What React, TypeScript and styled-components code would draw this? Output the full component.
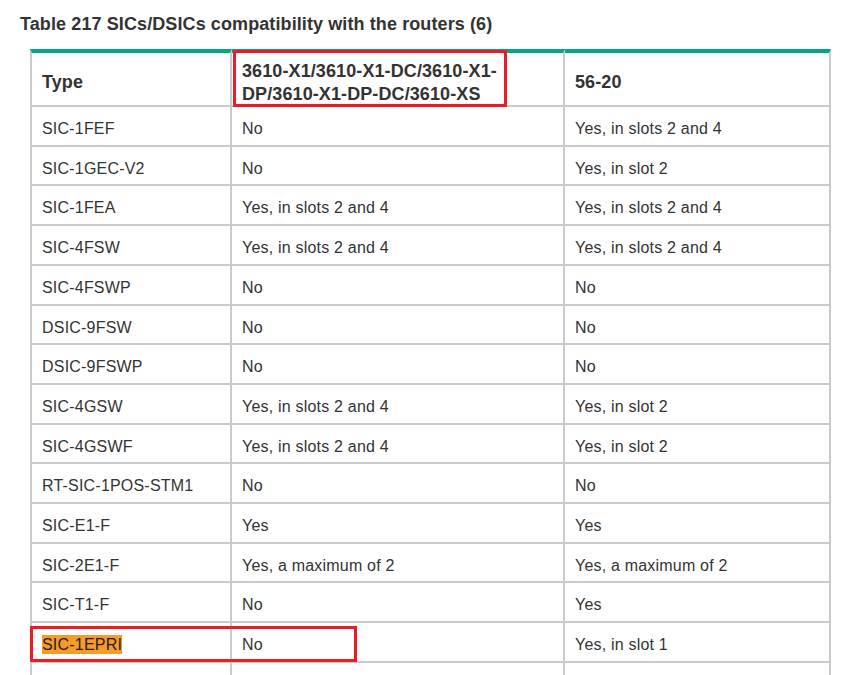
import React from "react";
import styled, { createGlobalStyle } from "styled-components";

const GlobalStyle = createGlobalStyle`
  html, body { margin: 0; padding: 0; background: #ffffff; }
  body { font-family: "Liberation Sans", Arial, sans-serif; color: #333333; }
`;

const Page = styled.div`
  padding: 13px 0 0 20px;
`;

const Title = styled.div`
  font-size: 18px;
  font-weight: bold;
  line-height: 22px;
  letter-spacing: 0.1px;
  color: #333333;
  margin-bottom: 14px;
`;

const TableWrap = styled.div`
  position: relative;
  margin-left: 10px;
  width: 801px;
`;

const Table = styled.table`
  border-collapse: separate;
  border-spacing: 0;
  table-layout: fixed;
  width: 801px;
  font-size: 16px;
`;

const HeadCell = styled.th<{ $first?: boolean }>`
  text-align: left;
  font-size: 18px;
  font-weight: bold;
  letter-spacing: 0.1px;
  vertical-align: middle;
  line-height: 22.5px;
  padding: 7px 10px 0 10px;
  border-top: 4px solid #01a982;
  border-right: 2px solid #c8cbcb;
  border-bottom: 2px solid #c8cbcb;
  border-left: ${(p) => (p.$first ? "2px solid #c8cbcb" : "none")};
  color: #333333;
`;

const HeadText = styled.span<{ $w?: number }>`
  display: block;
  max-width: ${(p) => (p.$w ? `${p.$w}px` : "none")};
`;

const Cell = styled.td<{ $first?: boolean }>`
  vertical-align: middle;
  line-height: 23.71px;
  letter-spacing: 0.2px;
  padding: 10px 10px 4px 10px;
  border-right: 2px solid #c8cbcb;
  border-bottom: 2px solid #c8cbcb;
  border-left: ${(p) => (p.$first ? "2px solid #c8cbcb" : "none")};
  color: #333333;
`;

const Highlight = styled.span`
  background: #f8992c;
  color: #222222;
  padding: 1px 0;
`;

const RedBox = styled.div<{ $l: number; $t: number; $w: number; $h: number }>`
  position: absolute;
  left: ${(p) => p.$l}px;
  top: ${(p) => p.$t}px;
  width: ${(p) => p.$w}px;
  height: ${(p) => p.$h}px;
  border: 3px solid #ec1c24;
  box-sizing: border-box;
  pointer-events: none;
`;

const rows: [string, string, string][] = [
  ["SIC-1FEF", "No", "Yes, in slots 2 and 4"],
  ["SIC-1GEC-V2", "No", "Yes, in slot 2"],
  ["SIC-1FEA", "Yes, in slots 2 and 4", "Yes, in slots 2 and 4"],
  ["SIC-4FSW", "Yes, in slots 2 and 4", "Yes, in slots 2 and 4"],
  ["SIC-4FSWP", "No", "No"],
  ["DSIC-9FSW", "No", "No"],
  ["DSIC-9FSWP", "No", "No"],
  ["SIC-4GSW", "Yes, in slots 2 and 4", "Yes, in slot 2"],
  ["SIC-4GSWF", "Yes, in slots 2 and 4", "Yes, in slot 2"],
  ["RT-SIC-1POS-STM1", "No", "No"],
  ["SIC-E1-F", "Yes", "Yes"],
  ["SIC-2E1-F", "Yes, a maximum of 2", "Yes, a maximum of 2"],
  ["SIC-T1-F", "No", "Yes"],
  ["SIC-1EPRI", "No", "Yes, in slot 1"],
];

export default function App() {
  return (
    <>
      <GlobalStyle />
      <Page>
        <Title>Table 217 SICs/DSICs compatibility with the routers (6)</Title>
        <TableWrap>
          <Table>
            <colgroup>
              <col style={{ width: 202 }} />
              <col style={{ width: 333 }} />
              <col style={{ width: 266 }} />
            </colgroup>
            <thead>
              <tr>
                <HeadCell $first>Type</HeadCell>
                <HeadCell>
                  <HeadText $w={270}>3610-X1/3610-X1-DC/3610-X1-DP/3610-X1-DP-DC/3610-XS</HeadText>
                </HeadCell>
                <HeadCell>56-20</HeadCell>
              </tr>
            </thead>
            <tbody>
              {rows.map(([a, b, c]) => (
                <tr key={a}>
                  <Cell $first>{a === "SIC-1EPRI" ? <Highlight>{a}</Highlight> : a}</Cell>
                  <Cell>{b}</Cell>
                  <Cell>{c}</Cell>
                </tr>
              ))}
              <tr>
                <Cell $first>{"\u00a0"}</Cell>
                <Cell>{"\u00a0"}</Cell>
                <Cell>{"\u00a0"}</Cell>
              </tr>
            </tbody>
          </Table>
          <RedBox $l={203} $t={1} $w={274} $h={57} />
          <RedBox $l={0} $t={577} $w={327} $h={36} />
        </TableWrap>
      </Page>
    </>
  );
}
